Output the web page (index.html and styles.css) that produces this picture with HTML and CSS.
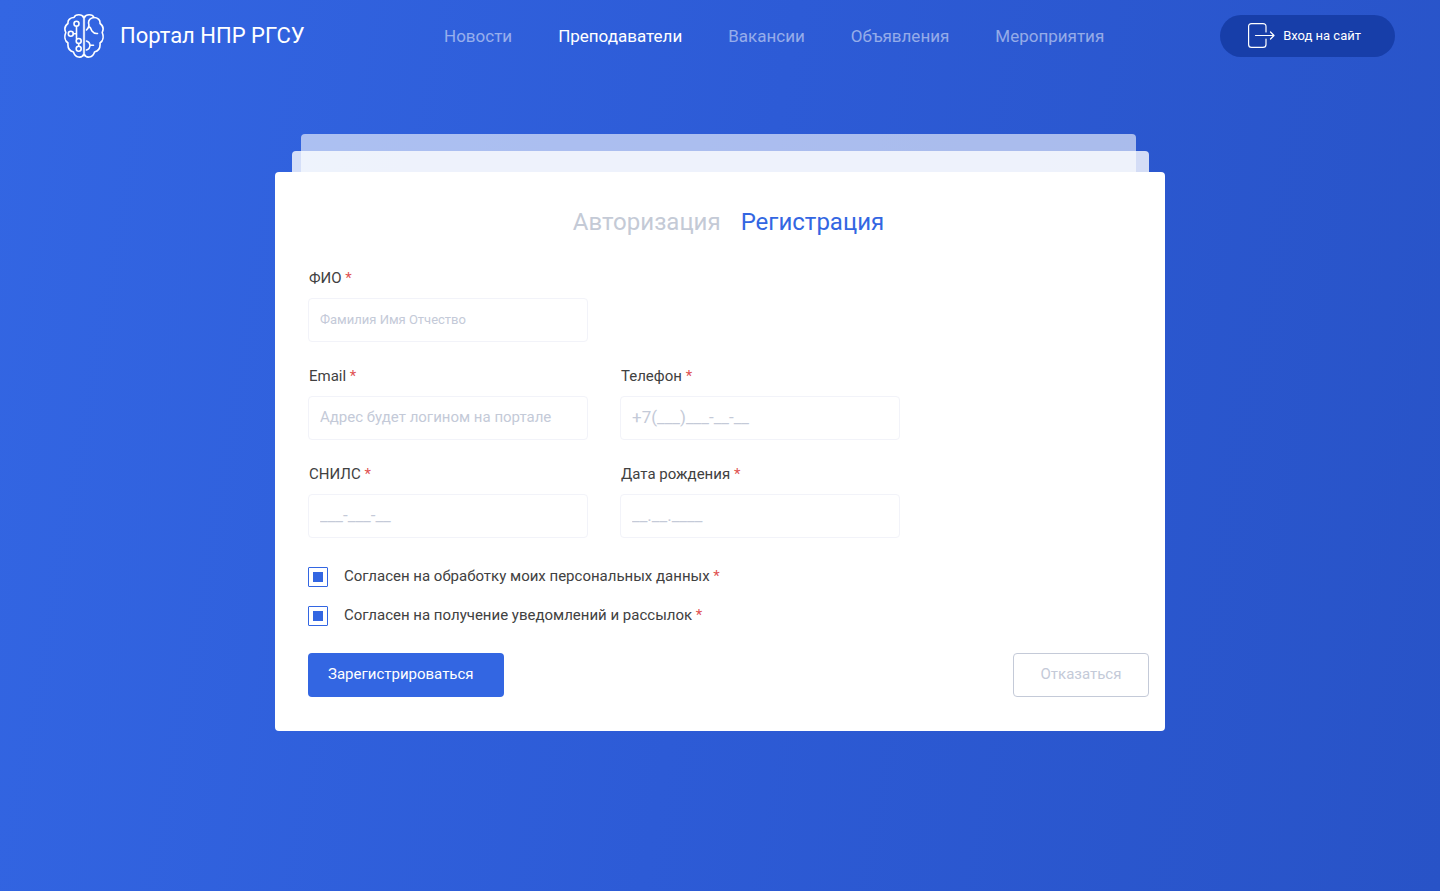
FILE: index.html
```html
<!DOCTYPE html>
<html lang="ru">
<head>
<meta charset="utf-8">
<meta name="viewport" content="width=device-width, initial-scale=1">
<title>Портал НПР РГСУ — Регистрация</title>
<link rel="stylesheet" href="styles.css">
</head>
<body>
<header class="header">
  <a class="logo" href="#">
    <svg class="logo-icon" viewBox="0 0 40 46" aria-hidden="true">
      <g fill="none" stroke="#fff" stroke-width="1.600" stroke-linecap="round" stroke-linejoin="round">
        <path d="M19.500 4.500C18 .8 11.500 1 10 4.500C6.500 4.500 3.500 7 4 10.500C1 12.500 .2 16 1.800 19.500C.2 23.500 .8 28 4 30C3.500 34.500 5.500 38 9.500 39C11 45 18 45.500 19.500 41.500"/>
        <path d="M20.500 4.500C22 .8 28.500 1 30 4.500C33.500 4.500 36.500 7 36 10.500C39 12.500 39.800 16 38.200 19.500C39.800 23.500 39.200 28 36 30C36.500 34.500 34.500 38 30.500 39C29 45 22 45.500 20.500 41.500"/>
        <path d="M20 3.500V42.500" stroke-width="2.200" opacity=".8"/>
        <circle cx="12.500" cy="10.800" r="2.500"/>
        <circle cx="6.800" cy="20.800" r="2.500"/>
        <circle cx="14.700" cy="28" r="2.500"/>
        <circle cx="14.700" cy="35.800" r="2.500"/>
        <path d="M12.500 13.300V25.500M12.500 20.800H9.300M14.700 30.500V33.300"/>
        <path d="M24.500 10C25.500 12.500 24.500 15 22.500 17M30 4.500C26.500 5 24.500 7 24.500 10M25.500 14C27 15 27 16.500 28 18C29.500 20 31.500 20.800 33.500 20.500"/>
        <path d="M22.500 28C24 28.500 25.800 30 26 32.200C25.800 35 24.500 36.500 22.500 37M26 32.200H29.500"/>
      </g>
    </svg>
    <span>Портал НПР РГСУ</span>
  </a>
  <nav class="nav">
    <a class="nav-link" href="#">Новости</a>
    <a class="nav-link nav-link-active" href="#">Преподаватели</a>
    <a class="nav-link" href="#">Вакансии</a>
    <a class="nav-link" href="#">Объявления</a>
    <a class="nav-link" href="#">Мероприятия</a>
  </nav>
  <button class="login" type="button">
    <svg class="login-icon" viewBox="0 0 28 26" aria-hidden="true">
      <path d="M18 9V3.500Q18 .6 15 .6H3.500Q.6 .6 .6 3.500V21.500Q.6 24.400 3.500 24.400H15Q18 24.400 18 21.500V16M7.500 12.500H26M22.500 9L26 12.500L22.500 16" fill="none" stroke="#fff" stroke-width="1.200" stroke-linecap="round" stroke-linejoin="round"/>
    </svg>
    <span>Вход на сайт</span>
  </button>
</header>

<main class="stack">
  <div class="sheet sheet-back"></div>
  <div class="sheet sheet-middle"></div>
  <form class="card">
    <div class="tabs">
      <button class="tab" type="button">Авторизация</button>
      <button class="tab tab-active" type="button">Регистрация</button>
    </div>
    <div class="fields">
      <div class="field field-first">
        <label class="label" for="name">ФИО <span class="required">*</span></label>
        <input class="input input-small" id="name" type="text" placeholder="Фамилия Имя Отчество">
      </div>
      <div class="field">
        <label class="label" for="email">Email <span class="required">*</span></label>
        <input class="input" id="email" type="email" placeholder="Адрес будет логином на портале">
      </div>
      <div class="field">
        <label class="label" for="phone">Телефон <span class="required">*</span></label>
        <input class="input input-mask" id="phone" type="tel" placeholder="+7(___)___-__-__">
      </div>
      <div class="field">
        <label class="label" for="snils">СНИЛС <span class="required">*</span></label>
        <input class="input input-mask" id="snils" type="text" placeholder="___-___-__">
      </div>
      <div class="field">
        <label class="label" for="birth">Дата рождения <span class="required">*</span></label>
        <input class="input input-mask" id="birth" type="text" placeholder="__.__.____">
      </div>
    </div>
    <div class="consents">
      <label class="consent"><input class="check" type="checkbox" checked><span>Согласен на обработку моих персональных данных <span class="required">*</span></span></label>
      <label class="consent"><input class="check" type="checkbox" checked><span>Согласен на получение уведомлений и рассылок <span class="required">*</span></span></label>
    </div>
    <div class="actions">
      <button class="button button-primary" type="submit">Зарегистрироваться</button>
      <button class="button button-outline" type="button">Отказаться</button>
    </div>
  </form>
</main>
</body>
</html>
```
FILE: styles.css
```css
* {
  box-sizing: border-box;
}

body {
  margin: 0;
  min-height: 100vh;
  background: linear-gradient(100deg, #3366e3 0%, #2d5bd6 50%, #2853c7 100%);
  color: #414141;
  font: 15px/20px Roboto, "Noto Sans", sans-serif;
}

button,
input {
  font: inherit;
}

button {
  border: 0;
  cursor: pointer;
}

a {
  color: inherit;
  text-decoration: none;
}

.header {
  display: grid;
  grid-template-columns: 380px 1fr auto;
  align-items: center;
  height: 72px;
  padding: 0 45px 0 64px;
  color: #fff;
}

.logo {
  display: flex;
  align-items: center;
  gap: 16px;
  font-size: 22px;
  line-height: 32px;
}

.logo-icon {
  width: 40px;
  height: 46px;
}

.nav {
  display: flex;
  gap: 46px;
  font-size: 17px;
  line-height: 22px;
}

.nav-link {
  color: rgba(255, 255, 255, 0.5);
}

.nav-link-active {
  color: #fff;
}

.login {
  display: flex;
  align-items: center;
  gap: 7px;
  height: 42px;
  padding: 0 34px 0 28px;
  border-radius: 21px;
  background: #173ea9;
  color: #fff;
  font-size: 13px;
}

.login-icon {
  width: 28px;
  height: 26px;
}

.stack {
  position: relative;
  width: 890px;
  max-width: 100%;
  margin: 62px auto 0;
  padding-top: 38px;
}

.sheet {
  position: absolute;
  border-radius: 4px 4px 0 0;
}

.sheet-back {
  top: 0;
  left: 26px;
  right: 29px;
  height: 38px;
  background: rgba(255, 255, 255, 0.6);
}

.sheet-middle {
  top: 17px;
  left: 17px;
  right: 16px;
  height: 21px;
  background: rgba(255, 255, 255, 0.8);
}

.card {
  padding: 34px 16px 34px 33px;
  border-radius: 4px;
  background: #fff;
}

.tabs {
  display: flex;
  justify-content: center;
  gap: 20px;
}

.tab {
  padding: 0;
  background: none;
  color: #c4cad6;
  font-size: 24px;
  line-height: 32px;
}

.tab-active {
  color: #3366e2;
}

.fields {
  display: grid;
  grid-template-columns: 280px 280px;
  gap: 24px 32px;
  margin-top: 30px;
}

.field {
  display: grid;
  gap: 10px;
}

.field-first {
  grid-column: 1 / -1;
  grid-template-columns: 280px;
}

.label {
  padding-left: 1px;
}

.required {
  color: #e05252;
}

.input {
  width: 100%;
  height: 44px;
  padding: 0 11px 2px;
  border: 1px solid #f2f3f9;
  border-radius: 4px;
  background: #fff;
  color: #414141;
}

.input-small {
  font-size: 13px;
}

.input-mask {
  font-size: 17px;
}

.input::placeholder {
  color: #c4cad8;
  opacity: 1;
}

.consents {
  display: grid;
  gap: 18px;
  margin-top: 28px;
}

.consent {
  display: flex;
  gap: 16px;
}

.check {
  appearance: none;
  width: 20px;
  height: 20px;
  margin: 1px 0 0;
  border: 1px solid #3366e2;
  border-radius: 1px;
  background: #fff;
}

.check:checked {
  padding: 4px;
  background: #3366e2 content-box;
}

.actions {
  display: flex;
  justify-content: space-between;
  margin-top: 27px;
}

.button {
  height: 44px;
  padding: 0 20px 2px;
  border-radius: 4px;
}

.button-primary {
  width: 196px;
  background: #3366e2;
  color: #fff;
  text-align: left;
}

.button-outline {
  width: 136px;
  border: 1px solid #c4cad8;
  background: #fff;
  color: #c4cad8;
}
```
